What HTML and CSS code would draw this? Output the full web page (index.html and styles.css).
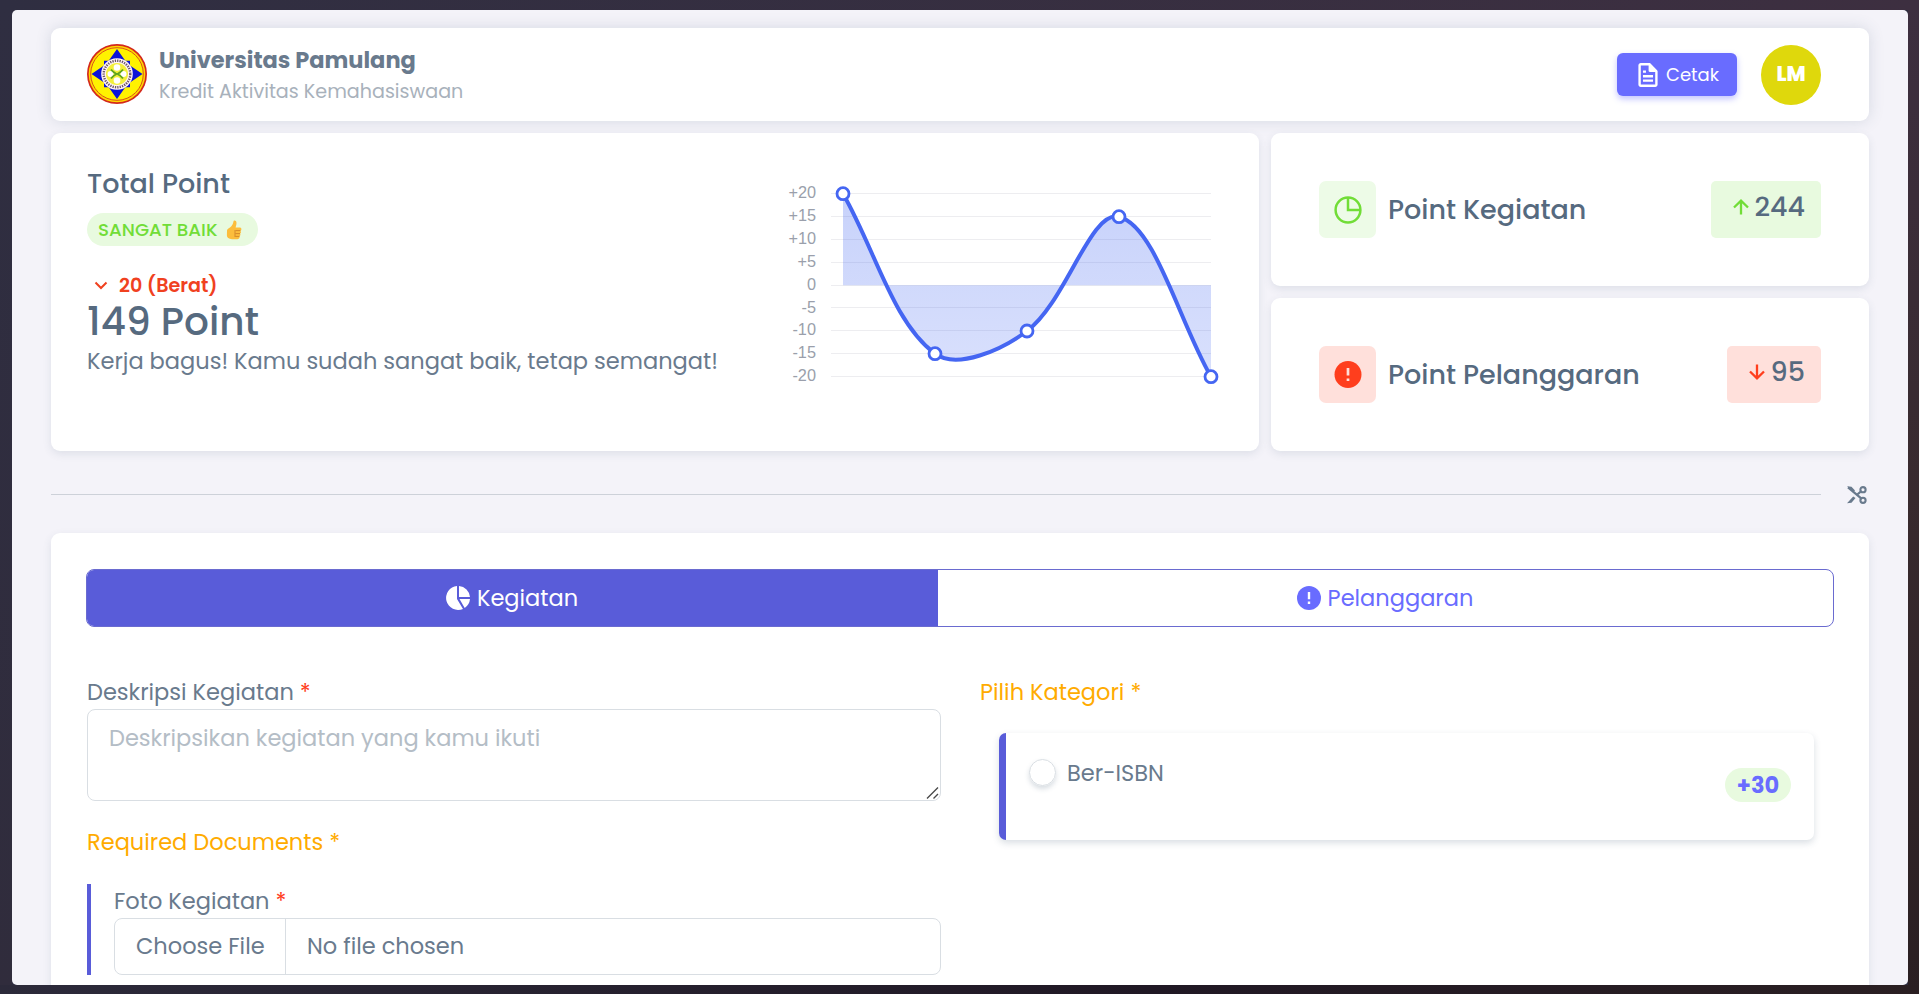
FILE: index.html
```html
<!DOCTYPE html>
<html lang="id">
<head>
<meta charset="utf-8">
<title>Kredit Aktivitas Kemahasiswaan</title>
<link rel="stylesheet" href="styles.css">
</head>
<body>
<main class="frame">
  <header class="card topbar">
    <svg class="logo" viewBox="0 0 60 60">
      <circle cx="30" cy="30" r="30" fill="#d3291c"/>
      <circle cx="30" cy="30" r="28.300" fill="#ffd800"/>
      <circle cx="30" cy="30" r="26.300" fill="#fff200" stroke="#d9541a" stroke-width="1"/>
      <path d="M30 5L38.300 16.700H43V21.500L55.500 30L43 38.500V43.300H38.300L30 55L21.700 43.300H17V38.500L4.500 30L17 21.500V16.700H21.700Z" fill="#0b12d8"/>
      <circle cx="30" cy="30" r="15.800" fill="#fff4f4"/>
      <circle cx="30" cy="30" r="13.300" fill="none" stroke="#6b5567" stroke-width="2.400" stroke-dasharray="1.300 1.100"/>
      <circle cx="30" cy="30" r="11" fill="#f4f03a"/>
      <g fill="#fff"><circle cx="30" cy="23.500" r="3.300"/><circle cx="30" cy="36.500" r="3.300"/><circle cx="23.500" cy="30" r="3"/><circle cx="36.500" cy="30" r="3"/></g>
      <path d="M24 25.500q2.500 3 5.500 4.500q-3 1.500-5.500 4.500M36 25.500q-2.500 3-5.500 4.500q3 1.500 5.500 4.500" fill="none" stroke="#5fa51e" stroke-width="1.900"/>
    </svg>
    <div class="brand">
      <div class="brand-name">Universitas Pamulang</div>
      <div class="brand-sub">Kredit Aktivitas Kemahasiswaan</div>
    </div>
    <button class="print">
      <svg class="ic-doc" viewBox="4 2 16 20" fill="currentColor"><path d="M19.900 8.600l-.1-.2c-.1-.1-.1-.2-.2-.3l-5.700-5.800-.3-.2-.2-.1H6C4.900 2 4 2.900 4 4v16c0 1.100.9 2 2 2h12c1.100 0 2-.9 2-2V8.800zM6 20V4h6.500v4.500c0 .6.400 1 1 1h4.500V20z"/><path d="M7.800 12h8.400v2H7.800zm0 3.700h8.400v2H7.800zm0-7.500h2.500v2H7.800z"/></svg>
      <span>Cetak</span>
    </button>
    <div class="avatar">LM</div>
  </header>

  <section class="summary">
    <div class="card total">
      <div class="total-info">
        <div class="total-title">Total Point</div>
        <div class="grade"><span>SANGAT BAIK</span>
          <svg class="thumb" viewBox="0 0 16 20"><path d="M1 10.500C1 9 3 8.500 4 7.600C6 5.700 7.200 4 7.400 1.800C7.500 0 10.400.2 10.500 2.700C10.600 4.500 9.900 6.300 9.600 7.500H14Q15.600 7.600 15.400 9.200Q15.400 10.300 14.500 10.700Q15.700 12.700 14.200 13.600Q15 15.400 13.600 16.300Q14 18.800 11.500 19.200H6Q1 18.800 .9 15.500Z" fill="#fcbd3c"/><path d="M9.500 10.600h4.800M9.300 13.600h4.700M9.200 16.400h4.200M9 10v7" stroke="#d58a2a" stroke-width="1" fill="none"/></svg>
        </div>
        <div class="level">
          <svg class="ic24" viewBox="0 0 24 24" fill="none" stroke="currentColor" stroke-width="2"><path d="M6.500 9.500l5.500 5.500 5.500-5.500"/></svg>
          <span>20 (Berat)</span>
        </div>
        <div class="score">149 Point</div>
        <div class="praise">Kerja bagus! Kamu sudah sangat baik, tetap semangat!</div>
      </div>
      <svg class="chart" viewBox="783 169 440 220">
        <defs><linearGradient id="area" x1="0" y1="0" x2="0" y2="1"><stop offset="0" stop-color="#3f63f0" stop-opacity=".29"/><stop offset="1" stop-color="#4a6cf3" stop-opacity=".21"/></linearGradient></defs>
        <path class="grid" d="M831 193.500H1211M831 216.500H1211M831 239.500H1211M831 262.500H1211M831 285.500H1211M831 307.500H1211M831 330.500H1211M831 353.500H1211M831 376.500H1211"/>
        <g class="ticks"><text x="816" y="197.500">+20</text><text x="816" y="220.500">+15</text><text x="816" y="243.500">+10</text><text x="816" y="266.500">+5</text><text x="816" y="289.500">0</text><text x="816" y="312.500">-5</text><text x="816" y="334.500">-10</text><text x="816" y="357.500">-15</text><text x="816" y="380.500">-20</text></g>
        <path fill="url(#area)" d="M843 285.200V193.700C875.200 249.700 892.500 322 935 353.700C956.900 370 1001.700 349.800 1027 331C1066.100 301.900 1090.500 209.600 1119 216.700C1154.900 225.600 1178.800 320.700 1211 376.700V285.200Z"/>
        <path class="line" d="M843 193.700C875.200 249.700 892.500 322 935 353.700C956.900 370 1001.700 349.800 1027 331C1066.100 301.900 1090.500 209.600 1119 216.700C1154.900 225.600 1178.800 320.700 1211 376.700"/>
        <g class="dots"><circle cx="843" cy="193.700" r="6"/><circle cx="935" cy="353.700" r="6"/><circle cx="1027" cy="331" r="6"/><circle cx="1119" cy="216.700" r="6"/><circle cx="1211" cy="376.700" r="6"/></g>
      </svg>
    </div>
    <div class="stats">
      <div class="card stat good">
        <div class="stat-icon"><svg viewBox="0 0 28 28" fill="none" stroke="currentColor" stroke-width="2.500"><circle cx="14" cy="14" r="12.400"/><path d="M14 1.600V14H26.400"/></svg></div>
        <div class="stat-name">Point Kegiatan</div>
        <div class="stat-value"><svg viewBox="0 0 16 16" fill="none" stroke="currentColor" stroke-width="2.300"><path d="M8 15.500V2M1 8.500L8 1.700 15 8.500"/></svg><span>244</span></div>
      </div>
      <div class="card stat bad">
        <div class="stat-icon"><svg viewBox="0 0 28 28"><circle cx="14" cy="13.500" r="13.500" fill="currentColor"/><path d="M14 7V14.500M14 17.500v2.600" stroke="#ffe0db" stroke-width="2.700"/></svg></div>
        <div class="stat-name">Point Pelanggaran</div>
        <div class="stat-value"><svg viewBox="0 0 16 16" fill="none" stroke="currentColor" stroke-width="2.300"><path d="M8 .5V14M1 7.500L8 14.300 15 7.500"/></svg><span>95</span></div>
      </div>
    </div>
  </section>

  <div class="divider">
    <hr>
    <svg viewBox="0 0 20 18" fill="none" stroke="currentColor"><path d="M1 1.300L14.800 12.800M9.500 9.200L14.500 5" stroke-width="2.200"/><path d="M0 .3L4.500 .8L8 4.500L6.500 6ZM0 17.300L6.200 10.500L8.500 12L4.500 16.800Z" fill="currentColor" stroke="none"/><circle cx="16" cy="3.700" r="2.600" stroke-width="2.100"/><circle cx="16" cy="14.300" r="2.600" stroke-width="2.100"/></svg>
  </div>

  <section class="card entry">
    <nav class="tabs">
      <a class="tab active"><svg class="ic24" viewBox="0 0 24 24" fill="currentColor"><path d="M11 0A12 12 0 1 0 17 22.900L11 13ZM13 0V11H24A12 12 0 0 0 13 0ZM13.500 13L18.700 21.900A12 12 0 0 0 24 13Z"/></svg><span>Kegiatan</span></a>
      <a class="tab"><svg class="ic24" viewBox="0 0 24 24"><circle cx="12" cy="12" r="12" fill="currentColor"/><path d="M12 6V13.200M12 15.500v2.500" stroke="#fff" stroke-width="2.400"/></svg><span>Pelanggaran</span></a>
    </nav>
    <div class="form">
      <div class="left">
        <label class="label">Deskripsi Kegiatan <b class="req">*</b></label>
        <div class="desc-wrap">
          <textarea class="desc" placeholder="Deskripsikan kegiatan yang kamu ikuti"></textarea>
          <svg class="grip" viewBox="0 0 13 12"><path d="M1 11.500L12 .5M7.500 11.500L12 7" stroke="#4a4a4a" stroke-width="1.400"/></svg>
        </div>
        <div class="label warn docs">Required Documents <b>*</b></div>
        <div class="doc">
          <label class="label">Foto Kegiatan <b class="req">*</b></label>
          <div class="file"><div class="file-btn">Choose File</div><div class="file-name">No file chosen</div></div>
        </div>
      </div>
      <div class="right">
        <div class="label warn">Pilih Kategori <b>*</b></div>
        <div class="option">
          <label class="choice"><i class="radio"></i><span>Ber-ISBN</span></label>
          <div class="plus">+30</div>
        </div>
      </div>
    </div>
  </section>
</main>
</body>
</html>
```
FILE: styles.css
```css
* { box-sizing: border-box; }
body {
  margin: 0;
  height: 994px;
  padding: 10px 11px 9px 12px;
  overflow: hidden;
  font-family: Poppins, Inter, "Open Sans", sans-serif;
  font-size: 22.5px;
  color: #697a8d;
  background:
    linear-gradient(90deg, #2c2a3a, #201824 60%, #2a1f22) bottom / 100% 9px no-repeat,
    linear-gradient(90deg, #2f2e41, #3d2f40) top / 100% 10px no-repeat,
    linear-gradient(180deg, #3d2f40, #382a2e 50%, #2a1f22) right / 11px 100% no-repeat,
    linear-gradient(180deg, #2f2e41, #302c3c) left / 12px 100% no-repeat,
    #2f2e41;
}
.frame {
  height: 975px;
  padding: 18px 39px 0;
  overflow: hidden;
  border-radius: 5px;
  background: #f4f3f9;
}
.card {
  background: #fff;
  border-radius: 9px;
  box-shadow: 0 3px 9px rgba(67, 89, 113, .12);
}
.ic24 { width: 24px; height: 24px; flex: none; }
span { white-space: nowrap; }

.topbar {
  display: flex;
  align-items: center;
  height: 93px;
  padding: 0 48px 0 36px;
  box-shadow: 0 0 15px rgba(67, 89, 113, .17);
}
.logo { width: 60px; height: 60px; margin: -1px 12px 0 0; }
.brand { flex: 1; padding-top: 2px; }
.brand-name, .brand-sub { height: 31px; line-height: 31px; }
.brand-name { font-weight: 700; }
.brand-sub { font-size: 19.125px; color: #a8b1bb; }
.print {
  display: flex;
  align-items: center;
  gap: 8px;
  width: 120px;
  height: 43px;
  margin-right: 24px;
  padding: 0 0 0 21px;
  border: 0;
  border-radius: 6px;
  background: #696cff;
  box-shadow: 0 3px 6px rgba(105, 108, 255, .4);
  color: #fff;
  font: 400 18px Poppins, Inter, sans-serif;
}
.ic-doc { width: 20px; height: 24px; flex: none; }
.avatar {
  width: 60px;
  height: 60px;
  border-radius: 50%;
  background: #dfd80c;
  color: #fff;
  font-size: 20.5px;
  font-weight: 800;
  line-height: 58px;
  text-align: center;
}

.summary { display: grid; grid-template-columns: 1208px 598px; gap: 12px; margin-top: 12px; height: 318px; }
.total { display: flex; justify-content: space-between; padding: 36px; }
.total-info { width: 650px; }
.total-title { font-size: 27px; line-height: 29px; font-weight: 500; color: #566a7f; }
.grade {
  display: flex;
  align-items: center;
  width: 171px;
  height: 33px;
  margin-top: 15px;
  padding: 0 0 0 11px;
  gap: 9px;
  border-radius: 17px;
  background: #e8fadf;
  color: #71dd37;
  font-size: 18.28px;
  font-weight: 500;
}
.thumb { width: 16px; height: 20px; }
.level { display: flex; align-items: center; gap: 6px; height: 30px; margin-top: 24px; padding-left: 2px; color: #f0411f; font-size: 19.125px; font-weight: 600; }
.score { font-size: 39px; line-height: 43px; font-weight: 500; color: #566a7f; }
.praise { line-height: 36px; white-space: nowrap; }
.chart { width: 440px; height: 220px; flex: none; }
.grid { stroke: #ededf0; stroke-width: 1; fill: none; }
.ticks { font: 16.3px "Liberation Sans", Arial, sans-serif; fill: #9a9fab; text-anchor: end; }
.line { fill: none; stroke: #4566f2; stroke-width: 4; }
.dots { fill: #fff; stroke: #4566f2; stroke-width: 2.8; }

.stats { display: grid; grid-template-rows: 153px 153px; gap: 12px; }
.stat { display: flex; align-items: center; padding: 0 48px; }
.stat-icon { display: flex; align-items: center; justify-content: center; width: 57px; height: 57px; border-radius: 7px; margin-right: 12px; }
.stat-icon svg { width: 28px; height: 28px; }
.stat-name { flex: 1; padding-top: 1px; font-size: 27px; font-weight: 500; color: #566a7f; }
.stat-value { display: flex; align-items: center; gap: 5px; height: 57px; padding: 0 16px 6px 22px; border-radius: 5px; font-size: 27px; font-weight: 500; }
.stat-value svg { width: 16px; height: 16px; }
.stat-value span { color: #566a7f; }
.good .stat-icon { background: #edfbe7; color: #71dd37; }
.good .stat-value { background: #e8fadf; color: #71dd37; }
.bad .stat-icon, .bad .stat-value { background: #ffe0db; color: #ff3e1d; }
.bad .stat-value { gap: 6px; }

.divider { display: flex; align-items: center; justify-content: space-between; height: 82px; padding: 5px 2px 0 0; color: #697a8d; }
.divider hr { width: 1770px; height: 1px; margin: 0; border: 0; background: #cdd1d9; }
.divider svg { width: 20px; height: 18px; }

.entry { height: 520px; padding: 36px 35px; }
.tabs { display: flex; height: 58px; border: 1px solid #6a6bd0; border-radius: 8px; overflow: hidden; }
.tab { display: flex; flex: 1; align-items: center; justify-content: center; gap: 7px; padding-right: 1px; color: #696cff; }
.tab.active { flex: 0 0 851px; background: #595cd9; color: #fff; }
.form { display: flex; gap: 39px; padding: 48px 1px 0; }
.left { width: 854px; }
.right { flex: 1; }
.label { display: block; height: 34px; line-height: 34px; }
.label b { font-weight: 400; }
.req { color: #ff3e1d; }
.warn { color: #ffab00; }
.desc-wrap { position: relative; }
.desc {
  display: block;
  width: 854px;
  height: 92px;
  padding: 11px 21px;
  border: 1px solid #d9dee3;
  border-radius: 8px;
  background: #fff;
  font: 22.5px/34px Poppins, Inter, sans-serif;
  resize: none;
}
.desc::placeholder { color: #b4bdc6; }
.grip { position: absolute; right: 2px; bottom: 2px; width: 13px; height: 12px; }
.docs { margin-top: 24px; }
.doc { height: 91px; margin-top: 25px; padding-left: 23px; border-left: 4px solid #595cd9; }
.file { display: flex; height: 57px; line-height: 55px; border: 1px solid #d9dee3; border-radius: 8px; }
.file-btn { width: 171px; padding-left: 21px; border-right: 1px solid #d9dee3; }
.file-name { padding-left: 21px; }
.option {
  display: flex;
  justify-content: space-between;
  width: 815px;
  height: 107px;
  margin: 24px 0 0 19px;
  padding: 26px 23px 0;
  border-left: 7px solid #595cd9;
  border-radius: 7px;
  box-shadow: 0 3px 7px rgba(67, 89, 113, .2);
}
.choice { display: flex; gap: 11px; height: 27px; line-height: 29px; }
.radio { width: 27px; height: 27px; border: 1px solid #d9dee3; border-radius: 50%; box-shadow: 0 3px 5px rgba(67, 89, 113, .2); }
.plus { width: 66px; height: 34px; margin-top: 9px; border-radius: 17px; background: #e8fadf; color: #696cff; font-weight: 700; line-height: 35px; text-align: center; }
```
